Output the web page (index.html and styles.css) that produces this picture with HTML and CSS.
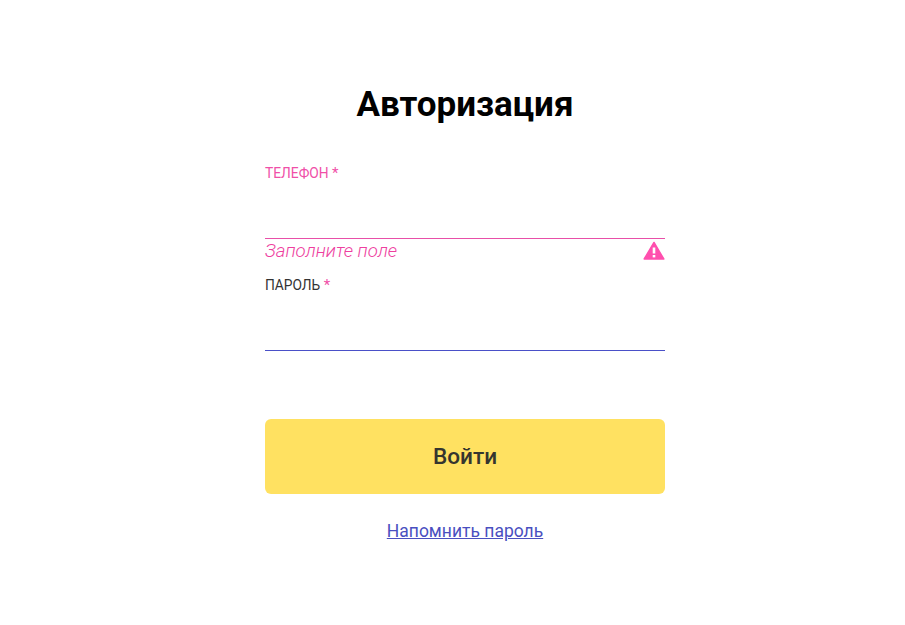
FILE: index.html
```html
<!DOCTYPE html>
<html lang="ru">
<head>
    <meta charset="UTF-8">
    <meta name="viewport" content="width=device-width, initial-scale=1.0">
    <title>Авторизация</title>
    <link rel="stylesheet" href="styles.css">
</head>
<body>
    <form class="login-form">
        <h1>Авторизация</h1>
        <div class="form-group has-error">
            <label for="phone">Телефон <span class="required">*</span></label>
            <input type="tel" id="phone">
            <div class="error-row">
                <span class="error-text">Заполните поле</span>
                <svg class="error-icon" viewBox="0 0 22 19" width="22" height="19">
                    <path fill="#ff4fae" stroke="#ff4fae" stroke-width="1.5" stroke-linejoin="round" d="M11 1.5 L20.8 18 H1.2 Z"/>
                    <rect x="9.7" y="6.5" width="2.6" height="6" fill="#fff"/>
                    <rect x="9.7" y="14" width="2.6" height="2.4" fill="#fff"/>
                </svg>
            </div>
        </div>
        <div class="form-group">
            <label for="password">Пароль <span class="required">*</span></label>
            <input type="password" id="password">
        </div>
        <button type="button" class="submit-button">Войти</button>
        <a class="remind-link" href="#">Напомнить пароль</a>
    </form>
</body>
</html>
```

FILE: styles.css
```css
/* Basic reset */
* {
    box-sizing: border-box;
    margin: 0;
    padding: 0;
}

body {
    font-family: Roboto, 'Liberation Sans', sans-serif;
    background-color: #fff;
    color: #2b2b2b;
    display: flex;
    justify-content: center;
    padding-left: 25px;
}

.login-form {
    width: 400px;
    margin-top: 83px;
    display: flex;
    flex-direction: column;
}

h1 {
    font-size: 35px;
    line-height: 44px;
    font-weight: 700;
    color: #000;
    text-align: center;
    margin-bottom: 38px;
}

.form-group {
    height: 112px;
}

label {
    display: block;
    font-size: 13.8px;
    line-height: 16px;
    text-transform: uppercase;
    color: #333;
}

.required {
    color: #f04fa8;
    font-size: 15px;
}

input {
    display: block;
    width: 100%;
    height: 58px;
    border: none;
    border-bottom: 1px solid #4a50c8;
    outline: none;
    background: transparent;
    font-family: inherit;
    font-size: 18px;
}

.has-error label {
    color: #f04fa8;
}

.has-error input {
    border-bottom-color: #e84fa8;
}

.error-row {
    display: flex;
    justify-content: space-between;
    align-items: center;
    height: 24px;
}

.error-text {
    font-size: 18.6px;
    font-style: italic;
    font-weight: 300;
    color: #ee3f9f;
}

.error-icon {
    display: block;
    margin-top: -1px;
}

.submit-button {
    height: 75px;
    margin-top: 30px;
    border: none;
    border-radius: 6px;
    background-color: #ffe161;
    color: #35352f;
    font-family: inherit;
    font-size: 22.6px;
    font-weight: 500;
    cursor: pointer;
}

.remind-link {
    margin-top: 26px;
    font-size: 17.5px;
    line-height: 22px;
    color: #4a4fc0;
    text-align: center;
}
```
